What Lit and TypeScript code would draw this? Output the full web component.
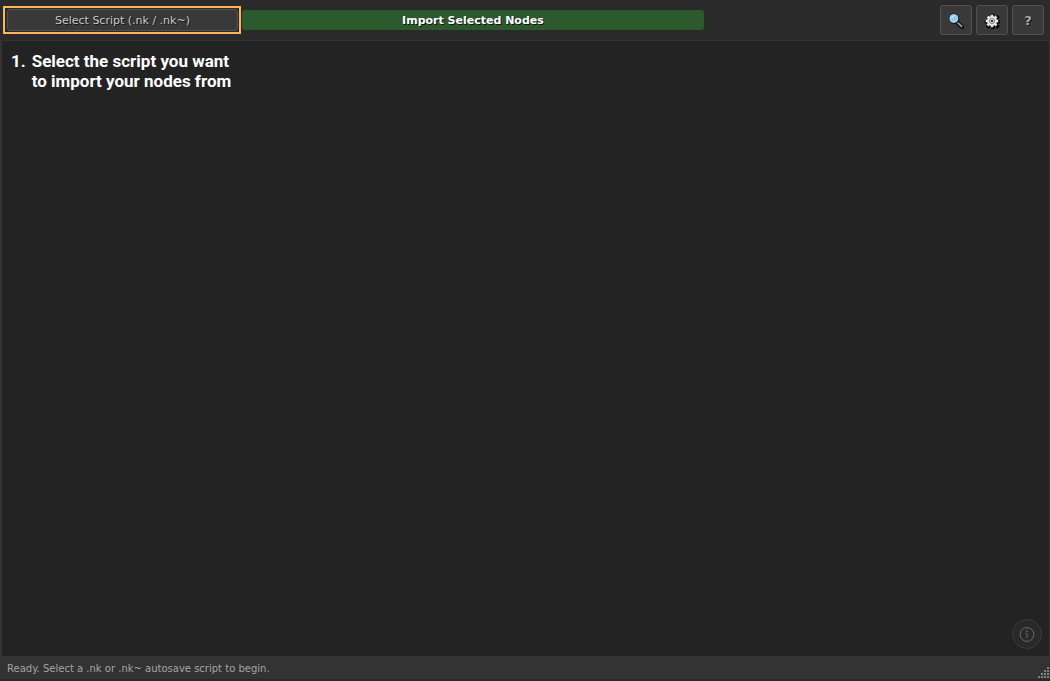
import { LitElement, html, css, svg } from "lit";
import { customElement, state } from "lit/decorators.js";

const searchIcon = svg`
  <path d="M9.6 9.8 14 14" stroke="#080a0c" stroke-width="4" stroke-linecap="round"/>
  <path d="M8.6 8.6 13.6 13.4" stroke="#8f9aa3" stroke-width="2" stroke-linecap="round"/>
  <circle cx="6.4" cy="6.2" r="4.8" fill="#0c0f12"/>
  <circle cx="5.8" cy="5.5" r="4.6" fill="#8ecbf5" stroke="#15191d" stroke-width="1"/>
  <circle cx="5.8" cy="5.5" r="3.9" fill="none" stroke="#b9dcf2" stroke-width="1"/>
  <path d="M3.6 5.2A2.6 2.6 0 0 1 6 3" stroke="#d9f0ff" fill="none"/>`;

const gearTeeth = "M8 1.7V14.3M1.7 8H14.3M3.5 3.5 12.5 12.5M12.5 3.5 3.5 12.5";

const gearIcon = svg`
  <path d=${gearTeeth} stroke="#080808" stroke-width="3.6" stroke-linecap="square" transform="translate(.8 .8)"/>
  <circle cx="8.8" cy="8.8" r="6" fill="#080808"/>
  <path d=${gearTeeth} stroke="#e4e4e0" stroke-width="2.6"/>
  <circle cx="8" cy="8" r="5" fill="#e4e4e0"/>
  <circle cx="8" cy="8" r="2.6" fill="#d0d0cc" stroke="#85858a" stroke-width="1"/>
  <circle cx="8" cy="8" r="1.1" fill="#111"/>`;

const infoIcon = svg`
  <circle cx="8" cy="8.5" r="6.9" fill="none" stroke="#666b70" stroke-width="1"/>
  <path d="M6.4 7.5H8V12" fill="none" stroke="#5f6b76" stroke-width="1"/>
  <rect x="7.2" y="4.4" width="1.4" height="1.4" fill="#78716a"/>`;

@customElement("app-root")
export class AppRoot extends LitElement {
  @state() private status = "Ready. Select a .nk or .nk~ autosave script to begin.";

  static styles = css`
    :host {
      display: flex;
      flex-direction: column;
      box-sizing: border-box;
      min-height: 100vh;
      padding-bottom: 2px;
      background: #292929;
      color: #c8c8c8;
      font: 11px/14px Verdana, "DejaVu Sans", sans-serif;
    }
    * { box-sizing: border-box; }
    button {
      margin: 0;
      padding: 2px 0 0;
      font: inherit;
      color: inherit;
      text-shadow: 1px 1px 0 #141414;
    }
    .toolbar {
      display: flex;
      align-items: center;
      gap: 4px;
      height: 41px;
      padding: 0 6px 1px 3px;
      background: #2a2a2a;
      border-bottom: 1px solid #333;
    }
    .actions {
      display: grid;
      grid-template-columns: 103fr 200fr 100fr;
      align-items: center;
      gap: 1px;
      flex: 1;
    }
    .highlight {
      display: flex;
      height: 28px;
      padding: 1px 1px 1px 2px;
      border: 2px solid #ffb35c;
    }
    .select {
      flex: 1;
      background: #393939;
      border: 1px solid #505050;
      border-radius: 3px;
    }
    .import {
      height: 20px;
      background: #2d5a2d;
      border: 0;
      border-radius: 3px;
      color: #fff;
      font-weight: bold;
    }
    .tool {
      display: grid;
      place-items: center;
      width: 32px;
      height: 30px;
      background: #393939;
      border: 1px solid #505050;
      border-radius: 3px;
      color: #a8a8a8;
      font-size: 13px;
      font-weight: bold;
    }
    .workspace {
      flex: 1;
      display: flex;
      flex-direction: column;
      justify-content: space-between;
      padding: 10px 7px 7px 9px;
      background: #232323;
      border: solid #333;
      border-width: 0 1px 0 2px;
    }
    .steps {
      margin: 0;
      padding: 0;
      list-style: none;
      color: #fff;
      font: bold 17px/20px Roboto, sans-serif;
    }
    .step {
      display: flex;
      gap: 6px;
    }
    .info {
      align-self: flex-end;
      display: grid;
      place-items: center;
      width: 30px;
      height: 30px;
      padding: 0;
      background: #292929;
      border: 1px solid #3c3c3c;
      border-radius: 50%;
    }
    .statusbar {
      display: flex;
      align-items: center;
      justify-content: space-between;
      height: 23px;
      padding: 2px 0 0 7px;
      background: #333;
      color: #a5a5a5;
      font-size: 10px;
    }
    .grip { align-self: flex-end; }
    svg { display: block; }
  `;

  private grip() {
    const cells = [[9, 0], [6, 3], [9, 3], [3, 6], [6, 6], [9, 6], [0, 9], [3, 9], [6, 9], [9, 9]];
    return html`<svg class="grip" width="12" height="12" aria-hidden="true">
      ${cells.map(([x, y]) => svg`<rect x=${x} y=${y} width="2" height="2" fill="#808080"/>`)}
    </svg>`;
  }

  render() {
    return html`
      <header class="toolbar">
        <div class="actions">
          <div class="highlight"><button class="select">Select Script (.nk / .nk~)</button></div>
          <button class="import">Import Selected Nodes</button>
        </div>
        <button class="tool" aria-label="Search"><svg width="16" height="16" viewBox="0 0 16 16">${searchIcon}</svg></button>
        <button class="tool" aria-label="Settings"><svg width="16" height="16" viewBox="0 0 16 16">${gearIcon}</svg></button>
        <button class="tool" aria-label="Help">?</button>
      </header>
      <main class="workspace">
        <ol class="steps">
          <li class="step"><span>1.</span><span>Select the script you want<br />to import your nodes from</span></li>
        </ol>
        <button class="info" aria-label="Information"><svg width="16" height="16" viewBox="0 0 16 16">${infoIcon}</svg></button>
      </main>
      <footer class="statusbar"><span>${this.status}</span>${this.grip()}</footer>
    `;
  }
}
